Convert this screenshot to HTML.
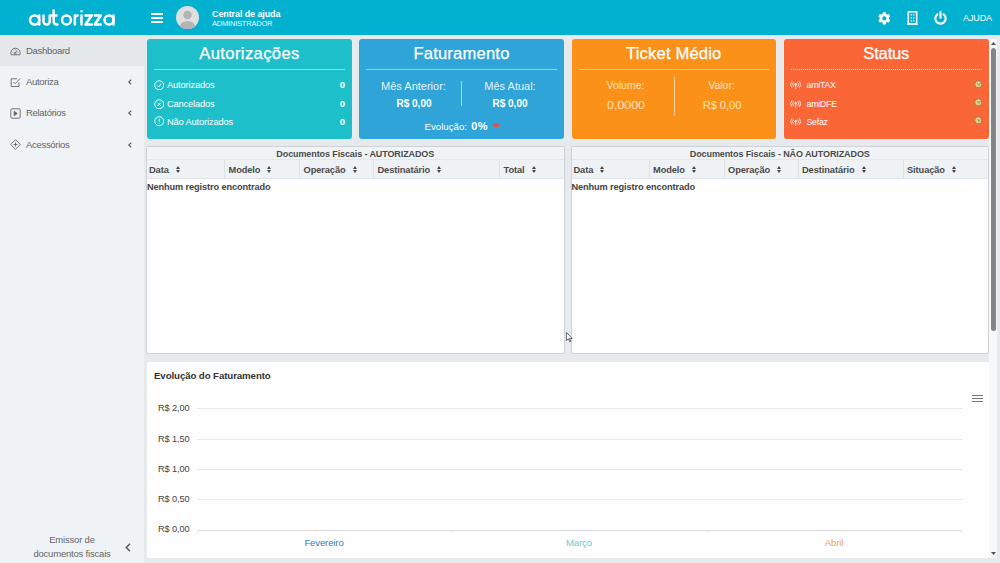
<!DOCTYPE html>
<html><head><meta charset="utf-8">
<style>
*{box-sizing:border-box;margin:0;padding:0}
html,body{width:1000px;height:563px;overflow:hidden}
body{font-family:"Liberation Sans",sans-serif;background:#e6eaed;position:relative;color:#444}
.abs{position:absolute}
#hdr{left:0;top:0;width:1000px;height:35px;background:#02b0d0}
#side{left:0;top:35px;width:144px;height:528px;background:#eff3f6}
.mi{position:absolute;left:0;width:145px;height:31px;font-size:9.5px;color:#5f656a;line-height:32px;padding-left:26px;letter-spacing:-0.3px}
.mi.act{background:#e4e8eb}
.mi svg{position:absolute;left:10px;top:10.5px}
.mi svg.chev{position:absolute;left:127.500px;top:13px}
.card{position:absolute;top:39px;height:100px;width:205px;border-radius:3px;color:#fff}
.card h2{position:absolute;left:0;right:0;top:4px;text-align:center;font-weight:normal;font-size:16.6px;line-height:22px;-webkit-text-stroke:0.25px #fff}
.card .hr{position:absolute;left:7px;right:7px;top:30px;height:1px;background:rgba(255,255,255,.5)}
.row{position:absolute;left:7px;right:7px;font-size:9.3px;line-height:12px}
.row b{position:absolute;right:0;top:0;font-size:9.5px}
.row svg{position:absolute;left:0;top:1px}
.row span{position:absolute;left:13px;top:0;letter-spacing:-0.15px}
.lbl{position:absolute;text-align:center;font-size:10.5px;line-height:12px;white-space:nowrap}
.val{position:absolute;text-align:center;font-size:10px;font-weight:bold;line-height:12px;white-space:nowrap}
.vsep{position:absolute;width:1px;background:rgba(255,255,255,.6)}
.tbl{position:absolute;top:145.500px;height:208.500px;background:#fefefe;border:1px solid #cfd3d7;border-radius:2px}
.tbl .tt{position:absolute;left:0;right:0;top:0;height:13.500px;background:#f1f4f6;text-align:center;font-size:9px;font-weight:bold;color:#4a4a4a;line-height:15.500px;border-bottom:1px solid #e3e7ea;letter-spacing:-0.1px}
.tbl .th{position:absolute;left:0;right:0;top:13.500px;height:19px;background:#eef2f5;border-bottom:1px solid #e1e5e8}
.tbl .th div{position:absolute;top:0;height:18px;font-size:9.300px;font-weight:bold;color:#4a4a4a;line-height:20.500px;border-left:1px solid #dde1e4;padding-left:3.500px;white-space:nowrap;letter-spacing:-0.1px}
.tbl .th div:first-child{border-left:none;padding-left:2px}
.tbl .th i{display:inline-block;position:relative;width:5.200px;height:8px;margin-left:7px;top:1.300px}
.tbl .th i:before{content:"";position:absolute;left:0;top:0;border:2.600px solid transparent;border-bottom:3px solid #444;border-top:none}
.tbl .th i:after{content:"";position:absolute;left:0;top:3.900px;border:2.600px solid transparent;border-top:3px solid #444;border-bottom:none}
.tbl .nr{position:absolute;left:0;top:34.500px;font-size:9.200px;font-weight:bold;color:#444;line-height:12px;letter-spacing:-0.1px}
#chart{left:147px;top:362px;width:842px;height:196px;background:#fefefe;border-radius:2px}
.yl{position:absolute;left:11px;font-size:9.200px;color:#444;line-height:12px;letter-spacing:-0.1px}
.gl{position:absolute;left:50px;width:765px;height:1px;background:#e9e9e9}
.xl{position:absolute;top:174.600px;width:80px;text-align:center;font-size:9.5px;line-height:12px;letter-spacing:-0.1px}
.tk{position:absolute;top:168px;width:1px;height:3px;background:#e6e6e6}
</style></head><body>

<div id="hdr" class="abs">
 <svg class="abs" style="left:26px;top:7px" width="92" height="22" viewBox="0 0 92 22" fill="none" stroke="#fff" stroke-width="2.5" stroke-linecap="round" stroke-linejoin="round">
  <ellipse cx="8.6" cy="13.05" rx="4.6" ry="4.5"/><path d="M13.2 8.5V17.55"/>
  <path d="M17.5 8.5V14.4a3.125 3.125 0 0 0 6.25 0V8.5"/>
  <path d="M27.65 3.45V14.6a3 3 0 0 0 3 3h0.8M25.5 8.5H30.6"/>
  <circle cx="40.45" cy="13.05" r="4.45"/>
  <path d="M48.85 8.5V17.55M48.85 11.2a2.7 2.7 0 0 1 2.7 -2.7"/>
  <path d="M55.5 8.5V17.55M55.5 4.2V4.21"/>
  <path d="M59.45 8.5H65.75L59.45 17.55H65.75"/>
  <path d="M68.75 8.5H74.75L68.75 17.55H74.75"/>
  <circle cx="83" cy="13.05" r="4.5"/><path d="M87.5 8.5V17.55"/>
 </svg>
 <div class="abs" style="left:151px;top:13px;width:12px;height:2px;background:#fff"></div>
 <div class="abs" style="left:151px;top:17px;width:12px;height:2px;background:#fff"></div>
 <div class="abs" style="left:151px;top:21px;width:12px;height:2px;background:#fff"></div>
 <svg class="abs" style="left:176px;top:6px" width="23" height="23" viewBox="0 0 23 23">
  <defs><clipPath id="cp"><circle cx="11.5" cy="11.5" r="11.5"/></clipPath></defs>
  <circle cx="11.5" cy="11.5" r="11.5" fill="#dfdfdf"/>
  <g clip-path="url(#cp)" fill="#b4b4b4"><circle cx="11.5" cy="9" r="4.2"/><ellipse cx="11.5" cy="20.5" rx="7.5" ry="5.5"/></g>
 </svg>
 <div class="abs" style="left:212px;top:8.5px;font-size:9px;font-weight:bold;color:#fff;line-height:11px;white-space:nowrap;letter-spacing:-0.1px">Central de ajuda</div>
 <div class="abs" style="left:212px;top:18.5px;font-size:7.5px;color:#e9f8fb;line-height:10px;white-space:nowrap;letter-spacing:-0.2px">ADMINISTRADOR</div>
 <!-- gear -->
 <svg class="abs" style="left:877.3px;top:10.8px" width="14.6" height="14.6" viewBox="0 0 24 24"><path fill="#fff" d="M19.4 13c.04-.33.06-.66.06-1s-.02-.67-.07-1l2.1-1.650c.19-.15.24-.42.12-.64l-2-3.460c-.12-.22-.39-.3-.61-.22l-2.490 1c-.52-.4-1.080-.73-1.690-.98l-.38-2.650C14.460 2.180 14.250 2 14 2h-4c-.25 0-.46.180-.49.420l-.38 2.650c-.61.250-1.170.59-1.690.98l-2.490-1c-.23-.09-.49 0-.61.220l-2 3.460c-.13.220-.07.490.12.640l2.110 1.650c-.04.320-.07.650-.07.980s.02.660.07.980l-2.110 1.650c-.19.150-.24.420-.12.640l2 3.460c.12.220.39.300.61.220l2.490-1c.52.400 1.080.73 1.690.98l.38 2.650c.03.240.24.420.49.420h4c.25 0 .46-.18.490-.42l.38-2.650c.61-.25 1.170-.59 1.690-.98l2.490 1c.23.090.49 0 .61-.22l2-3.460c.12-.22.070-.49-.12-.64L19.400 13zM12 15.500c-1.930 0-3.500-1.570-3.500-3.500s1.570-3.500 3.500-3.500 3.500 1.570 3.500 3.500-1.570 3.500-3.500 3.500z"/></svg>
 <!-- building -->
 <svg class="abs" style="left:907px;top:11px" width="11" height="14" viewBox="0 0 11 14" fill="none" stroke="#fff"><rect x="1.300" y="0.900" width="8.400" height="11.800" stroke-width="1.500"/><path d="M0 13.200H11" stroke-width="1.200"/><path d="M4.200 3v1.500M6.800 3v1.500M4.200 6v1.500M6.800 6v1.500M4.200 9v1.500M6.800 9v1.500" stroke-width="1.100"/></svg>
 <!-- power -->
 <svg class="abs" style="left:934px;top:11px" width="13" height="14" viewBox="0 0 13 14" fill="none" stroke="#fff" stroke-width="2.100" stroke-linecap="round"><path d="M3.400 3.300a5.200 5.200 0 1 0 6.200 0"/><path d="M6.500 1v5.800"/></svg>
 <div class="abs" style="left:963px;top:13px;font-size:9px;color:#fff;line-height:11px;letter-spacing:-0.1px">AJUDA</div>
</div>

<div id="side" class="abs">
 <div class="mi act" style="top:0">
  <svg width="11" height="11" viewBox="0 0 11 11" fill="none" stroke="#666" stroke-width="0.900"><path d="M1.200 8.800a4.700 4.700 0 1 1 8.600 0z"/><path d="M5.300 7.200L6.800 4.400"/><circle cx="5.200" cy="7.300" r="0.800"/><path d="M2.600 6.200h0.700M3.600 4h0.600M5.200 3.200h0.600M7.600 6.200h0.700" stroke-width="0.800"/></svg>Dashboard</div>
 <div class="mi" style="top:31.2px">
  <svg width="11" height="11" viewBox="0 0 11 11" fill="none" stroke="#666" stroke-width="0.900"><path d="M9 5.500V9.500H1.200V1.800H7"/><path d="M3.200 4.800L5.200 6.800L10 1.500"/></svg>Autoriza<svg class="chev" width="4" height="6" viewBox="0 0 4 6" fill="none" stroke="#555" stroke-width="1.100"><path d="M3.200 0.600L0.800 3L3.200 5.400"/></svg></div>
 <div class="mi" style="top:62.4px">
  <svg width="11" height="11" viewBox="0 0 11 11" fill="none" stroke="#666" stroke-width="0.900"><rect x="0.800" y="0.800" width="9.400" height="9.400" rx="1"/><path d="M4.200 3.300L7.200 5.500L4.200 7.700z" fill="#666"/></svg>Relatórios<svg class="chev" width="4" height="6" viewBox="0 0 4 6" fill="none" stroke="#555" stroke-width="1.100"><path d="M3.200 0.600L0.800 3L3.200 5.400"/></svg></div>
 <div class="mi" style="top:93.6px">
  <svg width="11" height="11" viewBox="0 0 11 11" fill="none" stroke="#666" stroke-width="0.900"><path d="M5.500 0.700L10.300 5.500L5.500 10.300L0.700 5.500z"/><path d="M5.500 3.500v4M3.500 5.500h4"/></svg>Acessórios<svg class="chev" width="4" height="6" viewBox="0 0 4 6" fill="none" stroke="#555" stroke-width="1.100"><path d="M3.200 0.600L0.800 3L3.200 5.400"/></svg></div>
 <div class="abs" style="left:20px;top:497.500px;width:104px;text-align:center;font-size:9.500px;line-height:14px;color:#666;letter-spacing:-0.200px">Emissor de<br>documentos fiscais</div>
 <svg class="abs" style="left:124.500px;top:507.500px" width="6" height="9" viewBox="0 0 6 9" fill="none" stroke="#555" stroke-width="1.400"><path d="M5 0.800L1.300 4.500L5 8.200"/></svg>
</div>

<!-- cards -->
<div class="card" style="left:147px;background:#1cbfca">
 <h2 style="letter-spacing:0.37px">Autorizações</h2><div class="hr"></div>
 <div class="row" style="top:40.2px"><svg style="left:-0.500px;top:0.800px" width="10.500" height="10.500" viewBox="0 0 10 10" fill="none" stroke="#fff" stroke-width="0.900"><circle cx="5" cy="5" r="4.300"/><path d="M3 5.200L4.400 6.600L7 3.600"/></svg><span>Autorizados</span><b>0</b></div>
 <div class="row" style="top:59px"><svg style="left:-0.500px;top:0.800px" width="10.500" height="10.500" viewBox="0 0 10 10" fill="none" stroke="#fff" stroke-width="0.900"><circle cx="5" cy="5" r="4.300"/><path d="M3.400 3.400L6.600 6.600M6.600 3.400L3.400 6.600"/></svg><span>Cancelados</span><b>0</b></div>
 <div class="row" style="top:76.5px"><svg style="left:-0.500px;top:0.800px" width="10.500" height="10.500" viewBox="0 0 10 10" fill="none" stroke="#fff" stroke-width="0.900"><circle cx="5" cy="5" r="4.300"/><path d="M5 2.600V5.600M5 6.900V7.400"/></svg><span>Não Autorizados</span><b>0</b></div>
</div>

<div class="card" style="left:359px;background:#2fa4d8">
 <h2 style="letter-spacing:0.19px">Faturamento</h2><div class="hr"></div>
 <div class="lbl" style="left:4.500px;width:100px;top:41px;font-size:11px;color:rgba(255,255,255,.9)">Mês Anterior:</div>
 <div class="val" style="left:5px;width:100px;top:58.500px">R$ 0,00</div>
 <div class="vsep" style="left:102px;top:42px;height:25px"></div>
 <div class="lbl" style="left:101px;width:100px;top:41px;font-size:11px;color:rgba(255,255,255,.9)">Mês Atual:</div>
 <div class="val" style="left:101px;width:100px;top:58.500px">R$ 0,00</div>
 <div class="lbl" style="left:65.500px;top:81px;font-size:9.700px">Evolução: <b style="font-size:11px;margin-left:1.5px;letter-spacing:0.3px">0%</b></div>
 <div class="abs" style="left:133.500px;top:83.500px;width:6px;height:4.500px;background:#d9534f;border-radius:1px"></div>
</div>

<div class="card" style="left:571.500px;width:204.500px;background:#fb9119">
 <h2 style="letter-spacing:0.17px">Ticket Médio</h2><div class="hr"></div>
 <div class="lbl" style="left:4px;width:100px;top:40px;color:#fde3c0">Volume:</div>
 <div class="val" style="left:4px;width:100px;top:60.500px;font-weight:normal;font-size:10.400px;transform:scaleX(1.19);color:#fde3c0">0,0000</div>
 <div class="vsep" style="left:102.300px;top:38px;height:39px"></div>
 <div class="lbl" style="left:100px;width:100px;top:40px;color:#fde3c0">Valor:</div>
 <div class="val" style="left:100px;width:100px;top:60.500px;font-weight:normal;font-size:10.300px;transform:scaleX(1.07);color:#fde3c0">R$ 0,00</div>
</div>

<div class="card" style="left:784px;width:204.500px;background:#fb6637">
 <h2 style="letter-spacing:-0.2px">Status</h2><div class="hr" style="background:none;border-top:1px dotted rgba(255,255,255,.8)"></div>
 <div class="row" style="top:40.2px"><svg style="left:-1px" width="11.400" height="9.500" viewBox="0 0 12 10" fill="none" stroke="#fff" stroke-width="0.850"><path d="M3.800 2.600a3.200 3.200 0 0 0 0 4.400M8.200 2.600a3.200 3.200 0 0 1 0 4.400M2.200 1.400a5 5 0 0 0 0 6.800M9.800 1.400a5 5 0 0 1 0 6.800M6 5V9.500"/><circle cx="6" cy="4.500" r="0.900" fill="#fff"/></svg><span style="left:15.500px;font-size:8.800px;letter-spacing:-0.250px">amiTAX</span></div>
 <div class="row" style="top:59px"><svg style="left:-1px" width="11.400" height="9.500" viewBox="0 0 12 10" fill="none" stroke="#fff" stroke-width="0.850"><path d="M3.800 2.600a3.200 3.200 0 0 0 0 4.400M8.200 2.600a3.200 3.200 0 0 1 0 4.400M2.200 1.400a5 5 0 0 0 0 6.800M9.800 1.400a5 5 0 0 1 0 6.800M6 5V9.500"/><circle cx="6" cy="4.500" r="0.900" fill="#fff"/></svg><span style="left:15.500px;font-size:8.800px;letter-spacing:-0.250px">amiDFE</span></div>
 <div class="row" style="top:76.5px"><svg style="left:-1px" width="11.400" height="9.500" viewBox="0 0 12 10" fill="none" stroke="#fff" stroke-width="0.850"><path d="M3.800 2.600a3.200 3.200 0 0 0 0 4.400M8.200 2.600a3.200 3.200 0 0 1 0 4.400M2.200 1.400a5 5 0 0 0 0 6.800M9.800 1.400a5 5 0 0 1 0 6.800M6 5V9.500"/><circle cx="6" cy="4.500" r="0.900" fill="#fff"/></svg><span style="left:15.500px;font-size:8.800px;letter-spacing:-0.250px">Sefaz</span></div>
 <svg class="abs" style="left:189.700px;top:40.6px" width="8.600" height="8.600" viewBox="0 0 10 10"><circle cx="5" cy="5" r="4.100" fill="#f8c98f" stroke="#4a9d48" stroke-width="1.000"/><path d="M4 3.500L5.500 6.300L7.400 3.600" fill="none" stroke="#4a9d48" stroke-width="0.900"/></svg>
 <svg class="abs" style="left:189.700px;top:58.7px" width="8.600" height="8.600" viewBox="0 0 10 10"><circle cx="5" cy="5" r="4.100" fill="#f8c98f" stroke="#4a9d48" stroke-width="1.000"/><path d="M4 3.500L5.500 6.300L7.400 3.600" fill="none" stroke="#4a9d48" stroke-width="0.900"/></svg>
 <svg class="abs" style="left:189.700px;top:76.9px" width="8.600" height="8.600" viewBox="0 0 10 10"><circle cx="5" cy="5" r="4.100" fill="#f8c98f" stroke="#4a9d48" stroke-width="1.000"/><path d="M4 3.500L5.500 6.300L7.400 3.600" fill="none" stroke="#4a9d48" stroke-width="0.900"/></svg>
</div>

<!-- tables -->
<div class="tbl" style="left:146px;width:418.500px">
 <div class="tt">Documentos Fiscais - AUTORIZADOS</div>
 <div class="th">
  <div style="left:0;width:77px">Data<i></i></div>
  <div style="left:77px;width:75px">Modelo<i></i></div>
  <div style="left:152px;width:74px">Operação<i></i></div>
  <div style="left:226px;width:126px">Destinatário<i></i></div>
  <div style="left:352px;width:64px">Total<i></i></div>
 </div>
 <div class="nr">Nenhum registro encontrado</div>
</div>
<div class="tbl" style="left:570.500px;width:418.500px">
 <div class="tt">Documentos Fiscais - NÃO AUTORIZADOS</div>
 <div class="th">
  <div style="left:0;width:77px">Data<i></i></div>
  <div style="left:77px;width:75px">Modelo<i></i></div>
  <div style="left:152px;width:74px">Operação<i></i></div>
  <div style="left:226px;width:105px">Destinatário<i></i></div>
  <div style="left:331px;width:85px">Situação<i></i></div>
 </div>
 <div class="nr">Nenhum registro encontrado</div>
</div>

<!-- chart -->
<div id="chart" class="abs">
 <div class="abs" style="left:7px;top:8px;font-size:9.700px;font-weight:bold;color:#333;line-height:12px;letter-spacing:-0.100px">Evolução do Faturamento</div>
 <div class="yl" style="top:40px">R$ 2,00</div><div class="gl" style="top:46.100px"></div>
 <div class="yl" style="top:71px">R$ 1,50</div><div class="gl" style="top:76.500px"></div>
 <div class="yl" style="top:101px">R$ 1,00</div><div class="gl" style="top:106.900px"></div>
 <div class="yl" style="top:131px">R$ 0,50</div><div class="gl" style="top:137.300px"></div>
 <div class="yl" style="top:161px">R$ 0,00</div><div class="gl" style="top:167.600px;background:#dadada"></div>
 <div class="tk" style="left:50px"></div><div class="tk" style="left:305px"></div><div class="tk" style="left:560px"></div><div class="tk" style="left:814px"></div>
 <div class="xl" style="left:137px;color:#2b7fbe">Fevereiro</div>
 <div class="xl" style="left:392px;color:#5fcdcb">Março</div>
 <div class="xl" style="left:647px;color:#f0a646">Abril</div>
 <div class="abs" style="left:825px;top:33px;width:11px;height:1px;background:#777"></div>
 <div class="abs" style="left:825px;top:36px;width:11px;height:1px;background:#777"></div>
 <div class="abs" style="left:825px;top:39px;width:11px;height:1px;background:#777"></div>
</div>

<!-- scrollbar -->
<div class="abs" style="left:989px;top:39px;width:8px;height:519px;background:#f8f8f8"></div>
<div class="abs" style="left:991px;top:47.500px;width:4.500px;height:283px;background:#858585;border-radius:2.500px"></div>
<svg class="abs" style="left:990.500px;top:41.500px" width="5" height="3" viewBox="0 0 5 3"><path d="M0 3L2.500 0L5 3z" fill="#505050"/></svg>
<svg class="abs" style="left:990.500px;top:551.800px" width="5" height="3" viewBox="0 0 5 3"><path d="M0 0L2.500 3L5 0z" fill="#505050"/></svg>
<!-- cursor -->
<svg class="abs" style="left:565.900px;top:331.700px" width="7.200" height="10.800" viewBox="0 0 8 12"><path d="M0.500 0.500V9.500L2.700 7.500L4.200 11L5.400 10.500L3.900 7.200H6.800z" fill="#fff" stroke="#333" stroke-width="0.800"/></svg>
</body></html>
